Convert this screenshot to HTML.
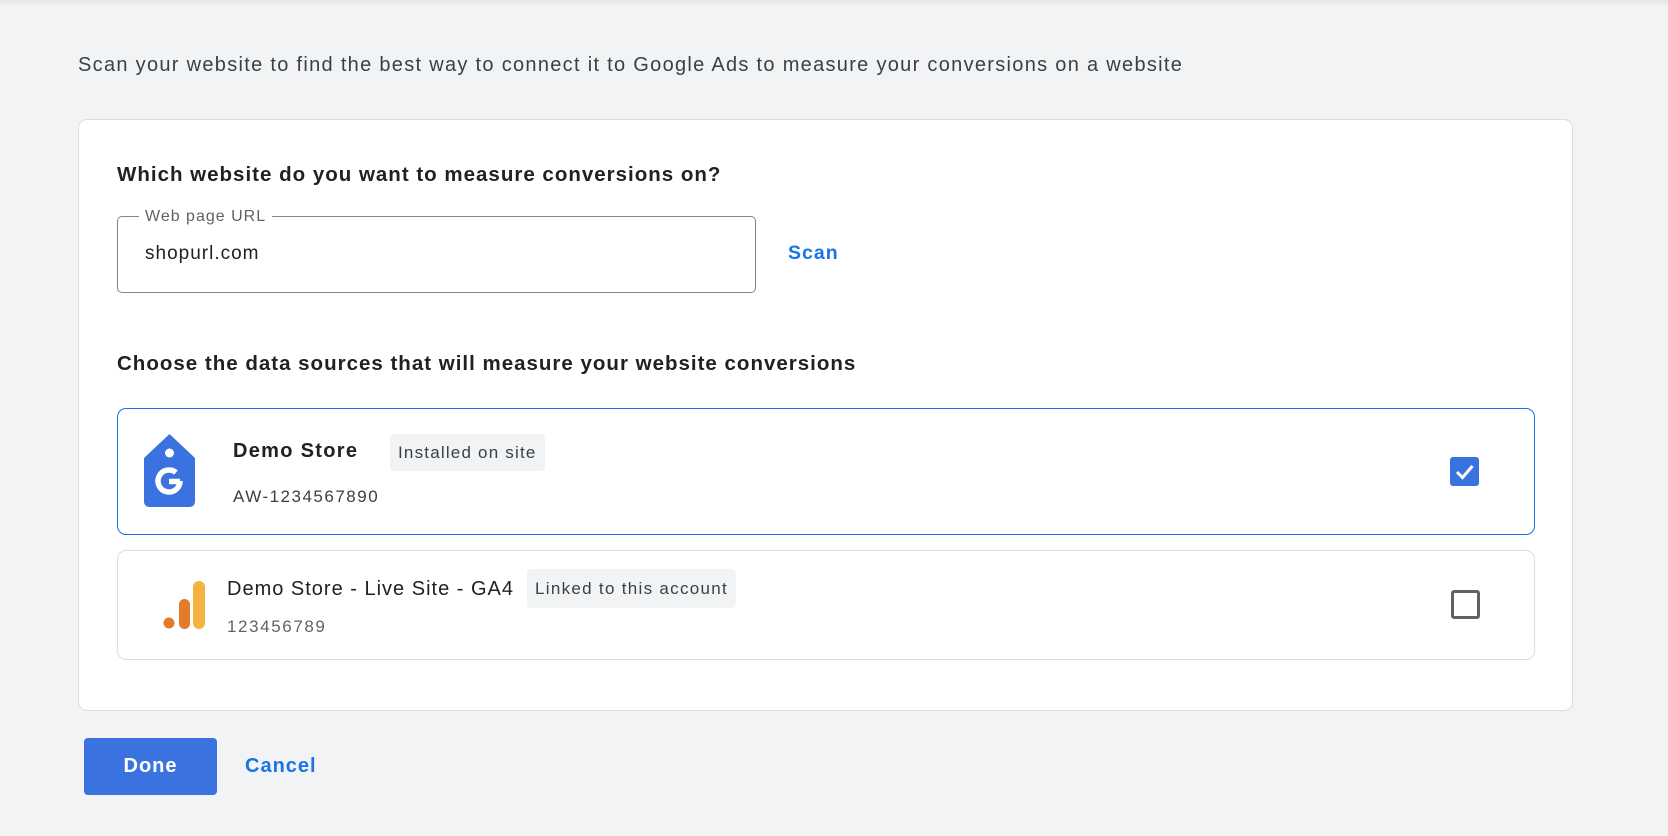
<!DOCTYPE html>
<html><head><meta charset="utf-8"><style>
*{box-sizing:border-box;margin:0;padding:0}
body{width:1668px;height:836px;background:#f1f3f4;font-family:"Liberation Sans",Arial,sans-serif;color:#202124;position:relative;overflow:hidden}
.topshade{position:absolute;left:0;top:0;width:1668px;height:6px;background:linear-gradient(#e3e4e6,#f1f3f4)}
.abs{position:absolute;white-space:nowrap}
.card{position:absolute;left:78px;top:119px;width:1495px;height:592px;background:#fff;border:1px solid #dadce0;border-radius:9px}
.input{position:absolute;left:117px;top:216px;width:639px;height:77px;border:1px solid #80868b;border-radius:5px}
.lbl{position:absolute;left:139px;top:207px;background:#fff;padding:0 6px;font-size:16px;color:#5f6368;line-height:20px;letter-spacing:1px}
.row{position:absolute;left:117px;width:1418px;border-radius:9px;background:#fff}
.chip{position:absolute;background:#f1f3f4;border-radius:4px;font-size:17px;color:#3c4043;padding:0 8px;line-height:37px;white-space:nowrap;letter-spacing:1.2px}
.cb{position:absolute;width:29px;height:29px;border-radius:3px}
</style></head><body>
<div class="topshade"></div>
<div class="abs" style="left:78px;top:54px;font-size:20px;color:#3c4043;letter-spacing:1.3px">Scan your website to find the best way to connect it to Google Ads to measure your conversions on a website</div>
<div class="card"></div>
<div class="abs" style="left:117px;top:163px;font-size:20.5px;font-weight:bold;color:#202124;letter-spacing:1px">Which website do you want to measure conversions on?</div>
<div class="input"></div>
<div class="lbl">Web page URL</div>
<div class="abs" style="left:145px;top:243px;font-size:19px;letter-spacing:1px">shopurl.com</div>
<div class="abs" style="left:788px;top:242px;font-size:19.5px;font-weight:bold;color:#1a73e8;letter-spacing:1px">Scan</div>
<div class="abs" style="left:117px;top:352px;font-size:20.5px;font-weight:bold;color:#202124;letter-spacing:1px">Choose the data sources that will measure your website conversions</div>

<div class="row" style="top:408px;height:127px;border:1px solid #1a73e8"></div>
<svg class="abs" style="left:144px;top:434px" width="51" height="73" viewBox="0 0 51 73">
<path d="M25.5 0 L51 24 V67 Q51 73 45 73 H6 Q0 73 0 67 V24 Z" fill="#3a73e0"/>
<circle cx="25.5" cy="19" r="4.5" fill="#fff"/>
<path d="M36 47 A11 11 0 1 1 32 38.5" fill="none" stroke="#fff" stroke-width="5.5"/>
<path d="M25 47.5 H36" stroke="#fff" stroke-width="5.5"/>
</svg>
<div class="abs" style="left:233px;top:440px;font-size:20px;font-weight:bold;color:#202124;letter-spacing:1.3px">Demo Store</div>
<div class="chip" style="left:390px;top:434px;height:37px">Installed on site</div>
<div class="abs" style="left:233px;top:487px;font-size:17px;color:#3c4043;letter-spacing:1.5px">AW-1234567890</div>
<div class="cb" style="left:1450px;top:457px;background:#3a73e0">
<svg width="29" height="29" viewBox="0 0 29 29"><path d="M7 15 L12.5 20.5 L22.5 9" fill="none" stroke="#fff" stroke-width="3"/></svg></div>

<div class="row" style="top:550px;height:110px;border:1px solid #dadce0"></div>
<svg class="abs" style="left:163px;top:581px" width="43" height="48" viewBox="0 0 43 48">
<rect x="30" y="0" width="12" height="48" rx="6" fill="#f4b23e"/>
<rect x="16" y="18" width="11" height="30" rx="5.5" fill="#e37b2a"/>
<circle cx="6" cy="42" r="5.5" fill="#e37b2a"/>
</svg>
<div class="abs" style="left:227px;top:578px;font-size:20px;color:#202124;letter-spacing:1px">Demo Store - Live Site - GA4</div>
<div class="chip" style="left:527px;top:569px;height:39px;line-height:39px;letter-spacing:1.3px">Linked to this account</div>
<div class="abs" style="left:227px;top:617px;font-size:17px;color:#5f6368;letter-spacing:1.6px">123456789</div>
<div class="cb" style="left:1451px;top:590px;border:3px solid #5f6368"></div>

<div class="abs" style="left:84px;top:738px;width:133px;height:57px;background:#3a73e0;border-radius:4px;color:#fff;font-size:20px;font-weight:bold;text-align:center;line-height:57px;letter-spacing:1px">Done</div>
<div class="abs" style="left:245px;top:755px;font-size:20px;font-weight:bold;color:#1a73e8;letter-spacing:1px">Cancel</div>
</body></html>
